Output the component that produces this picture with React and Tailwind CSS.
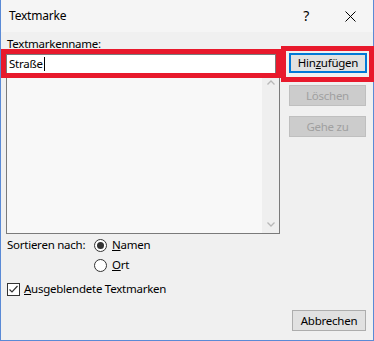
import React from "react";

const font = { fontFamily: '"Noto Sans", "Open Sans", sans-serif' };

function Radio({ checked }) {
  return (
    <span className="relative inline-flex h-[13px] w-[13px] items-center justify-center rounded-full border border-[#333] bg-white">
      {checked && <span className="h-[7px] w-[7px] rounded-full bg-[#333]" />}
    </span>
  );
}

export default function App() {
  return (
    <div
      className="relative flex h-[341px] w-[374px] flex-col border-x border-b border-[#5a8ad6] bg-[#f0f0f0] text-[11.5px] tracking-[-0.25px] text-black"
      style={font}
    >
      {/* title bar */}
      <div className="flex h-[32px] items-center bg-[#f5f5f5] pl-[8px]">
        <span className="text-[12px] tracking-[-0.2px]">Textmarke</span>
        <span className="ml-auto mr-[36px] text-[14px] leading-none">?</span>
        <svg width="11" height="11" viewBox="0 0 11 11" className="mr-[17px]">
          <path d="M0.5 0.5L10.5 10.5M10.5 0.5L0.5 10.5" stroke="#000" strokeWidth="1" />
        </svg>
      </div>

      {/* body */}
      <div className="flex flex-1 pl-[5px] pr-[6px]">
        {/* left column */}
        <div className="flex w-[274px] flex-col">
          <div className="mt-[3px] h-[17px] pl-[1px] leading-[17px]">Textmarkenname:</div>
          <div className="mt-[2px] flex h-[20px] w-[270px] items-center border border-[#7a7a7a] bg-white pl-[2px]">
            <span>Straße</span>
            <span className="ml-px h-[14px] w-px bg-black" />
          </div>
          <div className="flex h-[160px] w-[274px] border border-t-0 border-[#7a7a7a] bg-[#f8f8f8]">
            <div className="flex-1" />
            <div className="flex w-[17px] flex-col items-center justify-between bg-[#efefef] py-[6px]">
              <svg width="8" height="5" viewBox="0 0 8 5">
                <path d="M0.5 4.5L4 1L7.5 4.5" stroke="#b8b8b8" fill="none" strokeWidth="1.3" />
              </svg>
              <svg width="8" height="5" viewBox="0 0 8 5">
                <path d="M0.5 0.5L4 4L7.5 0.5" stroke="#b8b8b8" fill="none" strokeWidth="1.3" />
              </svg>
            </div>
          </div>

          <div className="mt-[1px] flex">
            <div className="w-[88px] pl-[1px] leading-[20px]">Sortieren nach:</div>
            <div className="flex flex-col">
              <div className="flex h-[20px] items-center gap-[5px]">
                <Radio checked />
                <span><span className="underline">N</span>amen</span>
              </div>
              <div className="flex h-[20px] items-center gap-[5px]">
                <Radio />
                <span><span className="underline">O</span>rt</span>
              </div>
            </div>
          </div>

          <div className="mt-[7px] flex h-[14px] items-center gap-[4px] pl-[1px]">
            <span className="flex h-[13px] w-[13px] items-center justify-center border border-[#333] bg-white">
              <svg width="11" height="11" viewBox="0 0 11 11">
                <path d="M1.5 5.5L4 8L9.5 2" stroke="#333" fill="none" strokeWidth="1.2" />
              </svg>
            </span>
            <span><span className="underline">A</span>usgeblendete Textmarken</span>
          </div>
        </div>

        {/* right column */}
        <div className="ml-[9px] flex flex-1 flex-col items-start">
          <button className="mt-[21px] flex h-[20px] w-[78px] items-center justify-center border-2 border-[#0078d7] bg-[#e1e1e1]">
            Hin<span className="underline">z</span>ufügen
          </button>
          <button className="mt-[12px] flex h-[21px] w-[77px] items-center justify-center border border-[#bfbfbf] bg-[#cccccc] text-[#a0a0a0]">
            Löschen
          </button>
          <button className="mt-[10px] flex h-[21px] w-[77px] items-center justify-center border border-[#bfbfbf] bg-[#cccccc] text-[#a0a0a0]">
            Gehe zu
          </button>
          <button className="mb-[9px] ml-[3px] mt-auto flex h-[21px] w-[74px] items-center justify-center border border-[#adadad] bg-[#e1e1e1]">
            Abbrechen
          </button>
        </div>
      </div>

      {/* red highlight overlays */}
      <div className="pointer-events-none absolute left-[0px] top-[49px] h-[29px] w-[280px] border-[5px] border-[#e8192c]" />
      <div className="pointer-events-none absolute left-[280px] top-[46px] h-[36px] w-[93px] border-[5px] border-[#e8192c]" />
    </div>
  );
}
